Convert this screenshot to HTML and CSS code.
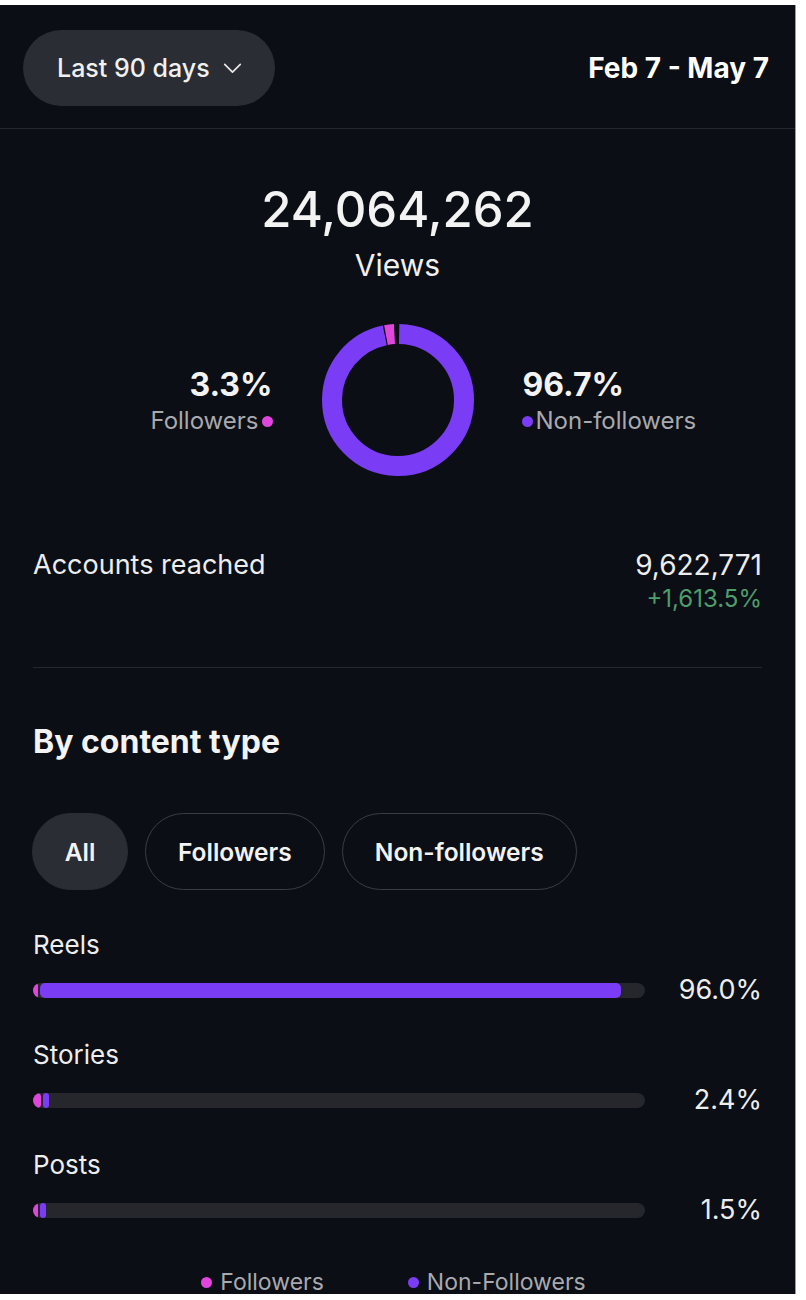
FILE: index.html
```html
<!DOCTYPE html>
<html>
<head>
<meta charset="utf-8">
<link rel="stylesheet" href="styles.css">
</head>
<body>
<div class="screen">
  <header class="top">
    <div class="range">Last 90 days
      <svg class="chev" viewBox="0 0 20 12" width="19" height="11"><path d="M1.5 1.5 L10 10 L18.5 1.5" fill="none" stroke="#e8e8e8" stroke-width="1.8" stroke-linecap="round" stroke-linejoin="round"/></svg>
    </div>
    <div class="dates">Feb 7 - May 7</div>
  </header>

  <section class="views">
    <div class="total">24,064,262</div>
    <div class="label">Views</div>
    <div class="split">
      <div class="side left">
        <div class="pct">3.3%</div>
        <div class="who">Followers <span class="dot pink"></span></div>
      </div>
      <svg class="donut" viewBox="0 0 160 160" width="160" height="160">
        <circle cx="80" cy="80" r="66" fill="none" stroke="#7a3cf5" stroke-width="20" stroke-dasharray="399.5 414.7" transform="rotate(-89 80 80)"/>
        <circle cx="80" cy="80" r="66" fill="none" stroke="#e046dc" stroke-width="20" stroke-dasharray="8.6 414.7" transform="rotate(259.5 80 80)"/>
      </svg>
      <div class="side right">
        <div class="pct">96.7%</div>
        <div class="who"><span class="dot purple"></span>Non-followers</div>
      </div>
    </div>
  </section>

  <section class="reach">
    <div class="reach-label">Accounts reached</div>
    <div class="reach-val">
      <div class="num">9,622,771</div>
      <div class="delta">+1,613.5%</div>
    </div>
  </section>

  <div class="rule"></div>

  <section class="content">
    <h2>By content type</h2>
    <div class="chips">
      <div class="chip active">All</div>
      <div class="chip">Followers</div>
      <div class="chip">Non-followers</div>
    </div>

    <div class="row">
      <div class="row-label">Reels</div>
      <div class="bar-line">
        <div class="track">
          <span class="seg pink" style="width:5px"></span>
          <span class="seg purple" style="width:581px"></span>
        </div>
        <div class="row-pct">96.0%</div>
      </div>
    </div>

    <div class="row">
      <div class="row-label">Stories</div>
      <div class="bar-line">
        <div class="track">
          <span class="seg pink" style="width:8px"></span>
          <span class="seg purple" style="width:6px"></span>
        </div>
        <div class="row-pct">2.4%</div>
      </div>
    </div>

    <div class="row">
      <div class="row-label">Posts</div>
      <div class="bar-line">
        <div class="track">
          <span class="seg pink" style="width:5px"></span>
          <span class="seg purple" style="width:6px"></span>
        </div>
        <div class="row-pct">1.5%</div>
      </div>
    </div>

    <div class="legend">
      <span class="leg"><span class="dot pink"></span>Followers</span>
      <span class="leg"><span class="dot purple"></span>Non-Followers</span>
    </div>
  </section>
</div>
</body>
</html>
```

FILE: styles.css
```css
html, body {
  margin: 0;
  padding: 0;
  background: #ffffff;
}
body {
  font-family: Inter, "Liberation Sans", Arial, sans-serif;
  color: #f3f3f3;
}
.screen {
  width: 795px;
  height: 1289px;
  margin-top: 5px;
  background: #0b0e14;
  border-right: 1px solid #9a9a9a;
  overflow: hidden;
}
.top {
  display: flex;
  justify-content: space-between;
  align-items: center;
  padding: 25px 26px 22px 23px;
  border-bottom: 1px solid #24272e;
}
.range {
  height: 76px;
  width: 252px;
  box-sizing: border-box;
  padding-left: 34px;
  border-radius: 38px;
  background: #2a2d34;
  display: flex;
  align-items: center;
  gap: 13px;
  font-size: 25px;
  font-weight: 500;
  color: #f0f0f0;
}
.chev { margin-top: 1px; }
.dates {
  font-size: 28px;
  font-weight: 700;
  color: #ffffff;
}
.views {
  display: flex;
  flex-direction: column;
  align-items: center;
  padding-top: 51px;
}
.total {
  font-size: 49px;
  font-weight: 500;
  line-height: 60px;
}
.label {
  font-size: 30px;
  line-height: 36px;
  margin-top: 7px;
  color: #f0f0f0;
}
.split {
  display: flex;
  align-items: center;
  margin-top: 37px;
}
.donut { display: block; margin: 0 45px; }
.side {
  width: 200px;
  display: flex;
  flex-direction: column;
  margin-top: 2px;
}
.left { align-items: flex-end; }
.right { align-items: flex-start; }
.pct {
  font-size: 32px;
  font-weight: 700;
  line-height: 38px;
}
.who {
  font-size: 24px;
  color: #a9a9ae;
  display: flex;
  align-items: center;
  gap: 3px;
  line-height: 30px;
  margin-top: 2px;
}
.right .who { margin-left: -1px; }
.dot {
  display: inline-block;
  width: 11px;
  height: 11px;
  border-radius: 50%;
}
.dot.pink, .seg.pink { background: #e046dc; }
.dot.purple, .seg.purple { background: #7a3cf5; }
.reach {
  display: flex;
  justify-content: space-between;
  align-items: flex-start;
  padding: 68px 33px 0 33px;
}
.reach-label {
  font-size: 27px;
  line-height: 34px;
  color: #ededed;
}
.reach-val { text-align: right; }
.num {
  font-size: 28px;
  line-height: 34px;
  color: #ededed;
}
.delta {
  font-size: 24px;
  line-height: 28px;
  color: #4e9d6b;
  margin-top: 3px;
}
.rule {
  height: 1px;
  background: #24272e;
  margin: 54px 33px 0 33px;
}
.content {
  padding: 0 33px;
}
h2 {
  margin: 55px 0 0 0;
  font-size: 32px;
  font-weight: 700;
  line-height: 38px;
}
.chips {
  display: flex;
  gap: 17px;
  margin-top: 52px;
  margin-left: -1px;
}
.chip {
  height: 77px;
  box-sizing: border-box;
  border-radius: 39px;
  border: 1.5px solid #3a3d44;
  padding: 0 32px;
  display: flex;
  align-items: center;
  font-size: 24.5px;
  font-weight: 600;
  color: #f3f3f3;
}
.chip.active {
  background: #2a2d34;
  border-color: #2a2d34;
  width: 96px;
  padding: 0;
  justify-content: center;
}
.chips + .row { margin-top: 39px; }
.row + .row { margin-top: 32px; }
.row-label {
  font-size: 26px;
  line-height: 32px;
  color: #ededed;
}
.bar-line {
  display: flex;
  align-items: center;
  margin-top: 12px;
  height: 34px;
}
.track {
  width: 612px;
  height: 15px;
  border-radius: 8px;
  background: #25272d;
  display: flex;
  gap: 2px;
  overflow: hidden;
}
.seg {
  height: 15px;
  border-radius: 5px;
}
.row-pct {
  flex: 1;
  text-align: right;
  font-size: 27px;
  color: #ededed;
  line-height: 34px;
}
.legend {
  display: flex;
  justify-content: center;
  gap: 84px;
  margin-top: 40px;
  font-size: 23px;
  line-height: 30px;
  color: #a9a9ae;
  padding-right: 8px;
}
.leg {
  display: flex;
  align-items: center;
  gap: 8px;
}
```
